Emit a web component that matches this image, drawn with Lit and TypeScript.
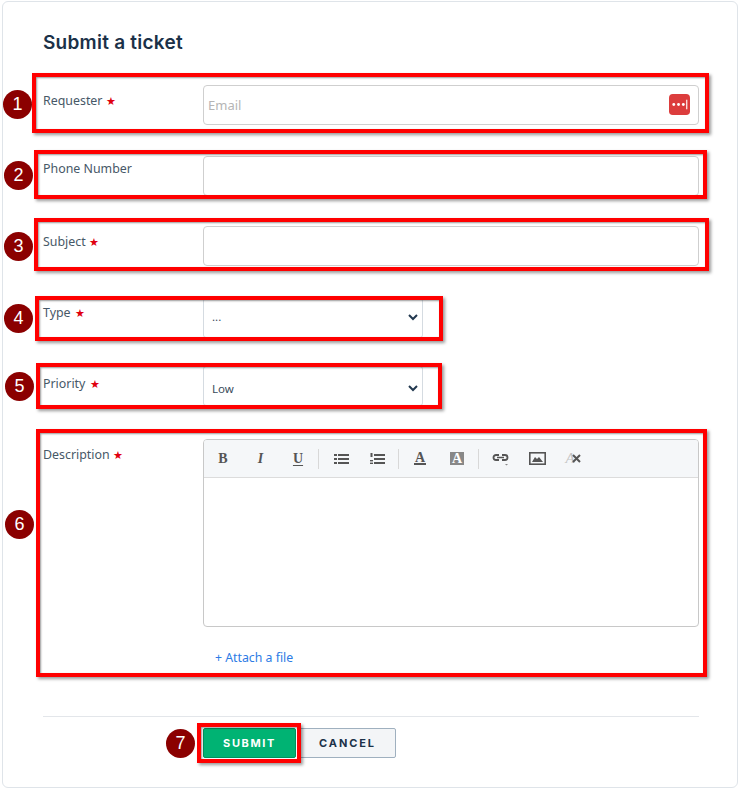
import { LitElement, html, css } from "lit";
import { customElement } from "lit/decorators.js";

const marks = [
  { n: 1, x: 32, y: 73, w: 677, h: 60, cx: 3, cy: 90 },
  { n: 2, x: 34, y: 150, w: 673, h: 49, cx: 4, cy: 161 },
  { n: 3, x: 34, y: 218, w: 675, h: 53, cx: 4, cy: 232 },
  { n: 4, x: 35, y: 296, w: 408, h: 45, cx: 4, cy: 304 },
  { n: 5, x: 36, y: 363, w: 406, h: 46, cx: 5, cy: 372 },
  { n: 6, x: 36, y: 429, w: 671, h: 248, cx: 5, cy: 510 },
  { n: 7, x: 197, y: 723, w: 104, h: 40, cx: 166, cy: 729 },
];

const chevron = html`<svg class="chev" width="10" height="7" viewBox="0 0 10 7"><path d="M1 1l4 4 4-4" fill="none" stroke="#22384f" stroke-width="2"/></svg>`;

@customElement("app-root")
export class AppRoot extends LitElement {
  static styles = css`
    :host { display: block; width: 740px; height: 790px; position: relative; overflow: hidden; background: #fff; font-family: "Noto Sans", sans-serif; color: #183247; }
    .card { box-sizing: border-box; margin: 1px 2px; width: 736px; height: 787px; border: 1px solid #dfe4e9; border-radius: 6px; padding: 29px 38px 0 40px; background: #fff; }
    h1 { margin: 0; font: 600 19px/24px Inter, sans-serif; letter-spacing: .25px; color: #1b3148; height: 24px; }
    .row { display: grid; grid-template-columns: 160px 496px; }
    .row label { font: 400 12.4px/16px "Noto Sans", sans-serif; color: #475867; padding-top: 8px; }
    .star { color: #e0000f; margin-left: 0; font-size: 11px; }
    .r1 { margin-top: 30px; }
    .r2 { margin-top: 31px; }
    .r3 { margin-top: 30px; }
    .r4 { margin-top: 32px; }
    .r5 { margin-top: 28px; }
    .r6 { margin-top: 33px; }
    .row .lp { padding-top: 5px; }
    .row .lt { padding-top: 7px; }
    .row .lq { padding-top: 10px; }
    .lt .star, .lq .star { margin-left: 1px; }
    input { box-sizing: border-box; display: block; width: 100%; height: 40px; border: 1px solid #cfcfcf; border-radius: 4px; padding: 0 4px; margin: 0; outline: none; font: 13px "Noto Sans", sans-serif; }
    input::placeholder { color: #b5b5b5; }
    .field { position: relative; }
    .pw { position: absolute; right: 9px; top: 9px; width: 21px; height: 21px; }
    .select { box-sizing: border-box; width: 220px; height: 40px; border: 1px solid #d5dbe1; border-radius: 3px; display: flex; align-items: center; justify-content: space-between; padding: 0 4px 2px 8px; font: 11.5px/14px "Noto Sans", sans-serif; color: #3a4c5c; }
    .select.low { padding: 4px 4px 0 8px; }
    .select.low span { padding-top: 2px; }
    .editor { box-sizing: border-box; height: 188px; border: 1px solid #c8c8c8; border-radius: 4px; overflow: hidden; }
    .toolbar { box-sizing: border-box; height: 38px; background: #f5f7f9; border-bottom: 1px solid #dcdcdc; display: flex; align-items: center; padding-left: 1px; }
    .group { display: flex; }
    .g1 { gap: 1.5px; }
    .g3 { gap: 1px; }
    .btn { width: 36px; height: 24px; display: flex; align-items: center; justify-content: center; color: #555; font: 700 14px/1 "Liberation Serif", serif; }
    .btn.i { font-style: italic; }
    .btn u { text-decoration-thickness: 1px; text-underline-offset: 2px; font-size: 14px; font-weight: 700; }
    .ua { border-bottom: 2px solid #555; line-height: 11px; padding: 0 1px; font-size: 14px; }
    .inv { background: #888; color: #fff; width: 14px; height: 13px; line-height: 13px; text-align: center; font-size: 14px; }
    .clear { color: #c4c4c4; font-style: italic; font-weight: 400; font-size: 15px; }
    .clear + svg { margin-left: -3px; }
    .sep { width: 1px; height: 20px; background: #d8d8d8; }
    .s1 { margin: 0 4px 0 2px; }
    .s2 { margin: 0 3px 0 3px; }
    .s3 { margin: 0 4px 0 3px; }
    .attach { margin: 22px 0 0 12px; font: 12.3px/18px "Noto Sans", sans-serif; color: #2c7be5; height: 18px; }
    .foot { margin-top: 49px; border-top: 1px solid #e3e6ea; padding: 11px 0 0 160px; display: flex; gap: 3px; }
    button { box-sizing: border-box; height: 30px; width: 93px; border-radius: 2px; font: 700 11px/1 Inter, sans-serif; letter-spacing: 1.6px; padding: 0; margin: 0; }
    .ok { background: #00b373; border: 1px solid #00915d; color: #fff; }
    .no { width: 97px; background: #f3f5f7; border: 1px solid #9fb0bf; color: #1b3148; letter-spacing: 1.9px; }
    .mark { position: absolute; box-sizing: border-box; border: 4px solid #f00; box-shadow: 2px 2px 3px rgba(0,0,0,.4), inset 1px 1px 2px rgba(0,0,0,.4); pointer-events: none; }
    .num { position: absolute; width: 29px; height: 29px; border-radius: 50%; background: #8b0000; color: #fff; font: 18px/29px "Liberation Sans", sans-serif; text-align: center; }
  `;

  render() {
    return html`
      <div class="card">
        <h1>Submit a ticket</h1>
        <div class="row r1"><label>Requester <span class="star">★</span></label>
          <div class="field"><input placeholder="Email" />
            <svg class="pw" viewBox="0 0 22 22"><rect width="22" height="22" rx="4" fill="#dc3d3d"/><circle cx="5" cy="11" r="1.5" fill="#fff"/><circle cx="10" cy="11" r="1.5" fill="#fff"/><circle cx="15" cy="11" r="1.5" fill="#fff"/><rect x="18" y="6" width="1.2" height="10" fill="#fff"/></svg>
          </div></div>
        <div class="row r2"><label class="lp">Phone Number</label><input /></div>
        <div class="row r3"><label>Subject <span class="star">★</span></label><input /></div>
        <div class="row r4"><label class="lt">Type <span class="star">★</span></label><div class="select"><span>...</span>${chevron}</div></div>
        <div class="row r5"><label class="lq">Priority <span class="star">★</span></label><div class="select low"><span>Low</span>${chevron}</div></div>
        <div class="row r6"><label>Description <span class="star">★</span></label>
          <div>
            <div class="editor">
              <div class="toolbar">
                <div class="group g1">
                  <div class="btn">B</div><div class="btn i">I</div><div class="btn"><u>U</u></div>
                </div>
                <div class="sep s1"></div>
                <div class="group">
                  <div class="btn"><svg width="15" height="10" viewBox="0 0 15 10" fill="#555"><rect y="0" width="3" height="2"/><rect x="4" y="0" width="11" height="2"/><rect y="4" width="3" height="2"/><rect x="4" y="4" width="11" height="2"/><rect y="8" width="3" height="2"/><rect x="4" y="8" width="11" height="2"/></svg></div>
                  <div class="btn"><svg width="15" height="11" viewBox="0 0 15 11" fill="#555"><rect x="0.5" y="0" width="2" height="4"/><rect x="0" y="7" width="3" height="1.4"/><rect x="0" y="9.6" width="3" height="1.4"/><rect x="4" y="1" width="11" height="2"/><rect x="4" y="5" width="11" height="2"/><rect x="4" y="9" width="11" height="2"/></svg></div>
                </div>
                <div class="sep s2"></div>
                <div class="group g3">
                  <div class="btn"><span class="ua">A</span></div>
                  <div class="btn"><span class="inv">A</span></div>
                </div>
                <div class="sep s3"></div>
                <div class="group">
                  <div class="btn"><svg width="18" height="14" viewBox="0 0 18 14" fill="none"><path d="M7 3H4a2.5 2.5 0 0 0 0 5h3M10 3h3a2.5 2.5 0 0 1 0 5h-3" stroke="#555" stroke-width="1.8"/><path d="M5 5.5h7" stroke="#555" stroke-width="1.6"/><path d="M13 12l1.5 1.5L16 12z" fill="#888"/></svg></div>
                  <div class="btn"><svg width="17" height="13" viewBox="0 0 17 13"><rect x="0.8" y="0.8" width="15.4" height="11.4" fill="none" stroke="#555" stroke-width="1.6"/><path d="M3 10l3-5 2 2 2-2 4 5z" fill="#555"/></svg></div>
                  <div class="btn"><span class="clear">A</span><svg width="9" height="9" viewBox="0 0 9 9"><path d="M1 1l7 7M8 1l-7 7" stroke="#555" stroke-width="2"/></svg></div>
                </div>
              </div>
            </div>
            <div class="attach">+ Attach a file</div>
          </div></div>
        <div class="foot"><button class="ok">SUBMIT</button><button class="no">CANCEL</button></div>
      </div>
      ${marks.map((m) => html`
        <div class="mark" style="left:${m.x}px;top:${m.y}px;width:${m.w}px;height:${m.h}px"></div>
        <div class="num" style="left:${m.cx}px;top:${m.cy}px">${m.n}</div>`)}
    `;
  }
}
